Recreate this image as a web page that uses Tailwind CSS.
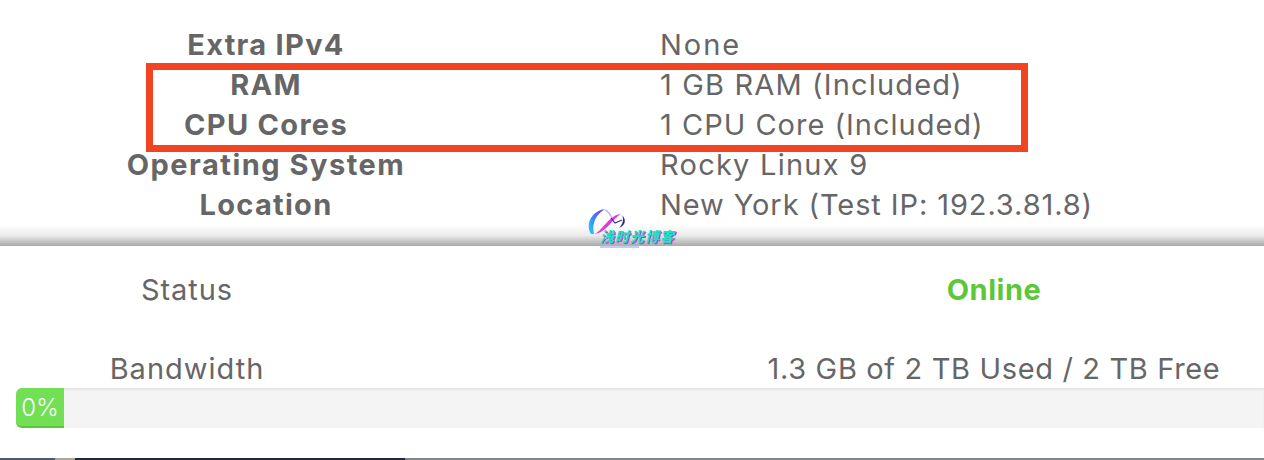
<!DOCTYPE html>
<html lang="en">

<head>
    <meta charset="UTF-8">
    <title>Service Details</title>
    <script src="https://cdn.jsdelivr.net/npm/@tailwindcss/browser@4"></script>
</head>

<body class="bg-white font-['Inter','Open_Sans',sans-serif] text-[#666666]">
    <div class="relative w-[1264px] h-[460px] overflow-hidden">
        <!-- Server details -->
        <div class="grid grid-cols-[532px_1fr] pt-[24.6px] text-[29px] leading-[39.75px] tracking-[1px] h-[225px]">
            <div class="text-center font-bold tracking-[1.3px]">Extra IPv4</div>
            <div class="pl-[128px] tracking-[2px]">None</div>
            <div class="text-center font-bold tracking-[1.3px]">RAM</div>
            <div class="pl-[128px] tracking-[1.15px]">1 GB RAM (Included)</div>
            <div class="text-center font-bold tracking-[1.3px]">CPU Cores</div>
            <div class="pl-[128px]">1 CPU Core (Included)</div>
            <div class="text-center font-bold tracking-[1.5px]">Operating System</div>
            <div class="pl-[128px] tracking-[1.25px]">Rocky Linux 9</div>
            <div class="text-center font-bold tracking-[1.3px]">Location</div>
            <div class="pl-[128px] tracking-[0.9px]">New York (Test IP: 192.3.81.8)</div>
        </div>

        <!-- Red highlight -->
        <div class="absolute left-[146px] top-[63px] w-[882px] h-[89px] border-[7px] border-[#f04423]"></div>

        <div class="h-[21px] bg-gradient-to-b from-white via-[#ebebeb] to-[#a8a8a8]"></div>

        <!-- Usage -->
        <div class="grid grid-cols-[374px_1fr_540px] pt-[24px] text-[29px] leading-[40px] tracking-[0.9px]">
            <div class="text-center">Status</div>
            <div></div>
            <div class="text-center font-bold text-[#5cc73a] tracking-[0.5px]">Online</div>
        </div>
        <div class="grid grid-cols-[374px_1fr_540px] pt-[39px] text-[29px] leading-[40px] tracking-[1px]">
            <div class="text-center">Bandwidth</div>
            <div></div>
            <div class="text-center tracking-[0.65px]">1.3 GB of 2 TB Used / 2 TB Free</div>
        </div>
        <div class="ml-[16px] mt-[-1px] h-[40px] bg-[#f4f4f4] rounded-l-[6px] shadow-[inset_0_2px_2px_rgba(0,0,0,0.06)] flex">
            <div class="w-[48px] h-full bg-[#72e055] border-b-[2px] border-[#5cc73a] rounded-l-[6px] text-white text-[24px] font-light leading-[39px] text-center">0%</div>
        </div>

        <!-- Watermark -->
        <div class="absolute left-[586px] top-[208px] w-[92px] h-[44px]">
            <svg class="absolute left-0 top-0" width="50" height="30" viewBox="0 0 50 30" fill="none">
                <defs>
                    <linearGradient id="arc" x1="0" y1="1" x2="1" y2="0">
                        <stop offset="0" stop-color="#22d3ee" />
                        <stop offset="0.5" stop-color="#3b82f6" />
                        <stop offset="1" stop-color="#8b2cf5" />
                    </linearGradient>
                </defs>
                <path d="M5 26C-1 17 5 3 19 1C12 5 5 14 8 26Z" fill="url(#arc)" />
                <path d="M9 26C17 22 23 7 35 6C27 10 21 24 9 26Z" fill="#e635e0" />
                <path d="M19 2C22 3 24 6 26 10" stroke="#c4b5fd" stroke-width="1.5" />
                <path d="M25 10L29 15L36 12" stroke="#3730a3" stroke-width="1.2" />
                <path d="M36 7C41 12 39 18 33 20C37 16 38 11 36 7Z" fill="#312e81" />
            </svg>
            <div class="absolute left-[14px] top-[20px] text-[14px] leading-[16px] tracking-[1px] font-black italic text-[#1fe0c4] font-['Noto_Sans_CJK_SC',sans-serif] whitespace-nowrap [text-shadow:1px_1px_0_#d92fd0]">浅时光博客</div>
            <div class="absolute left-[14px] top-[37px] w-[39px] h-[3px] bg-[#a5b8f8]/70 blur-[0.6px]"></div>
        </div>

        <!-- Photo behind the panel, showing along the bottom edge -->
        <div class="absolute left-0 bottom-0 w-full h-[2px] flex">
            <div class="w-[55px] bg-[#4a5a70]"></div>
            <div class="w-[20px] bg-[#a9a69c]"></div>
            <div class="w-[330px] bg-[#1f2a40]"></div>
            <div class="flex-1 bg-[#7e878a]"></div>
        </div>
    </div>
</body>

</html>
